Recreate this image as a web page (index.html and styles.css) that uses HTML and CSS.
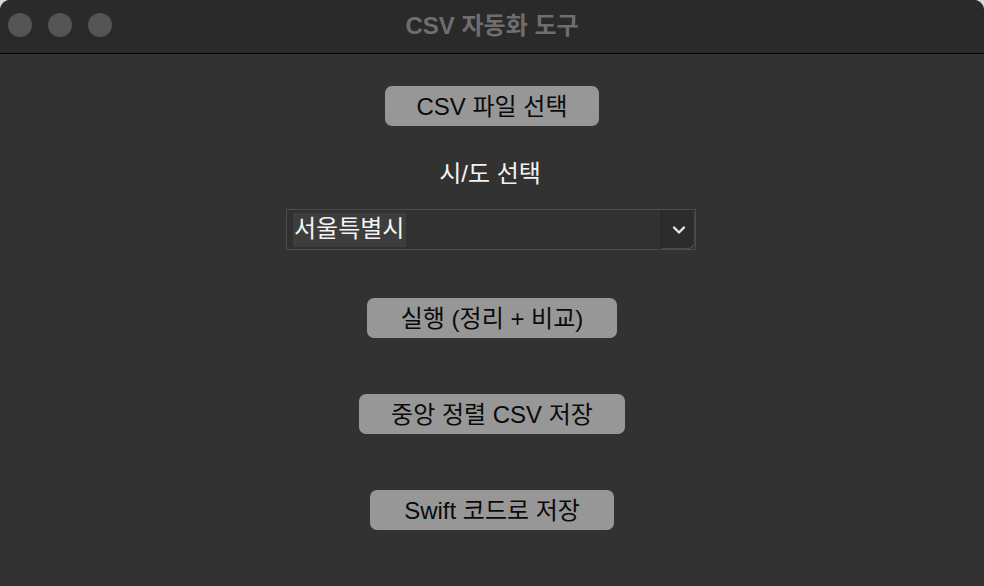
FILE: index.html
```html
<!doctype html>
<html>
<head>
<meta charset="UTF-8">
<title>CSV 자동화 도구</title>
<link rel="stylesheet" href="styles.css">
</head>
<body>
<div class="window">
  <div class="titlebar">
    <div class="lights">
      <span class="light"></span>
      <span class="light"></span>
      <span class="light"></span>
    </div>
    <div class="title">CSV 자동화 도구</div>
  </div>
  <div class="content">
    <a class="btn btn-file" href="#">CSV 파일 선택</a>
    <div class="label">시/도 선택</div>
    <div class="select">
      <div class="select-value"><span class="selected">서울특별시</span></div>
      <div class="select-arrow">
        <svg width="14" height="10" viewBox="0 0 14 10"><path d="M2 2.5 L7 7.5 L12 2.5" fill="none" stroke="#e6e6e6" stroke-width="2.4" stroke-linecap="round" stroke-linejoin="round"/></svg>
      </div>
    </div>
    <a class="btn btn-run" href="#">실행 (정리 + 비교)</a>
    <a class="btn btn-csv" href="#">중앙 정렬 CSV 저장</a>
    <a class="btn btn-swift" href="#">Swift 코드로 저장</a>
  </div>
</div>
</body>
</html>
```

FILE: styles.css
```css
html, body { margin: 0; padding: 0; background: #d8d8d8; }
body { font-family: "Liberation Sans", "Noto Sans CJK KR", sans-serif; }
.window { width: 984px; height: 586px; background: #323232; border-radius: 10px 10px 0 0; overflow: hidden; display: flex; flex-direction: column; }
.titlebar { height: 53px; background: #2a2a2a; border-bottom: 1px solid #050505; position: relative; display: flex; align-items: center; justify-content: center; }
.lights { position: absolute; left: 8px; top: 13px; display: flex; gap: 16px; }
.light { width: 24px; height: 24px; border-radius: 50%; background: #545454; }
.title { color: #6e6e6e; font-size: 24px; font-weight: bold; margin-top: -7px; }
.content { display: flex; flex-direction: column; align-items: center; padding-top: 32px; }
.btn { display: flex; align-items: center; justify-content: center; height: 40px; box-sizing: border-box; padding-bottom: 4px; background: #979797; color: #0a0a0a; text-decoration: none; font-size: 24px; border-radius: 7px; }
.btn-file { width: 214px; }
.btn-run { width: 250px; margin-top: 48px; }
.btn-csv { width: 266px; margin-top: 56px; }
.btn-swift { width: 244px; margin-top: 56px; }
.label { color: #f2f2f2; font-size: 24px; line-height: 26px; margin-top: 35px; margin-left: -4px; }
.select { width: 410px; height: 41px; box-sizing: border-box; margin-top: 22px; margin-left: -2px; border: 1px solid #4c4c4c; background: #2f2f2f; display: flex; }
.select-value { flex: 1; display: flex; align-items: center; padding-left: 6px; background: #313131; }
.selected { background: #3d3d3d; color: #f4f4f4; font-size: 24px; line-height: 32px; padding: 0 2px 2px 1px; }
.select-arrow { width: 33px; display: flex; align-items: center; justify-content: center; background: #2c2c2c; border-left: 1px solid #262626; border-radius: 0 6px 6px 0; box-shadow: inset -1px -1px 0 #4a4a4a; }
```
